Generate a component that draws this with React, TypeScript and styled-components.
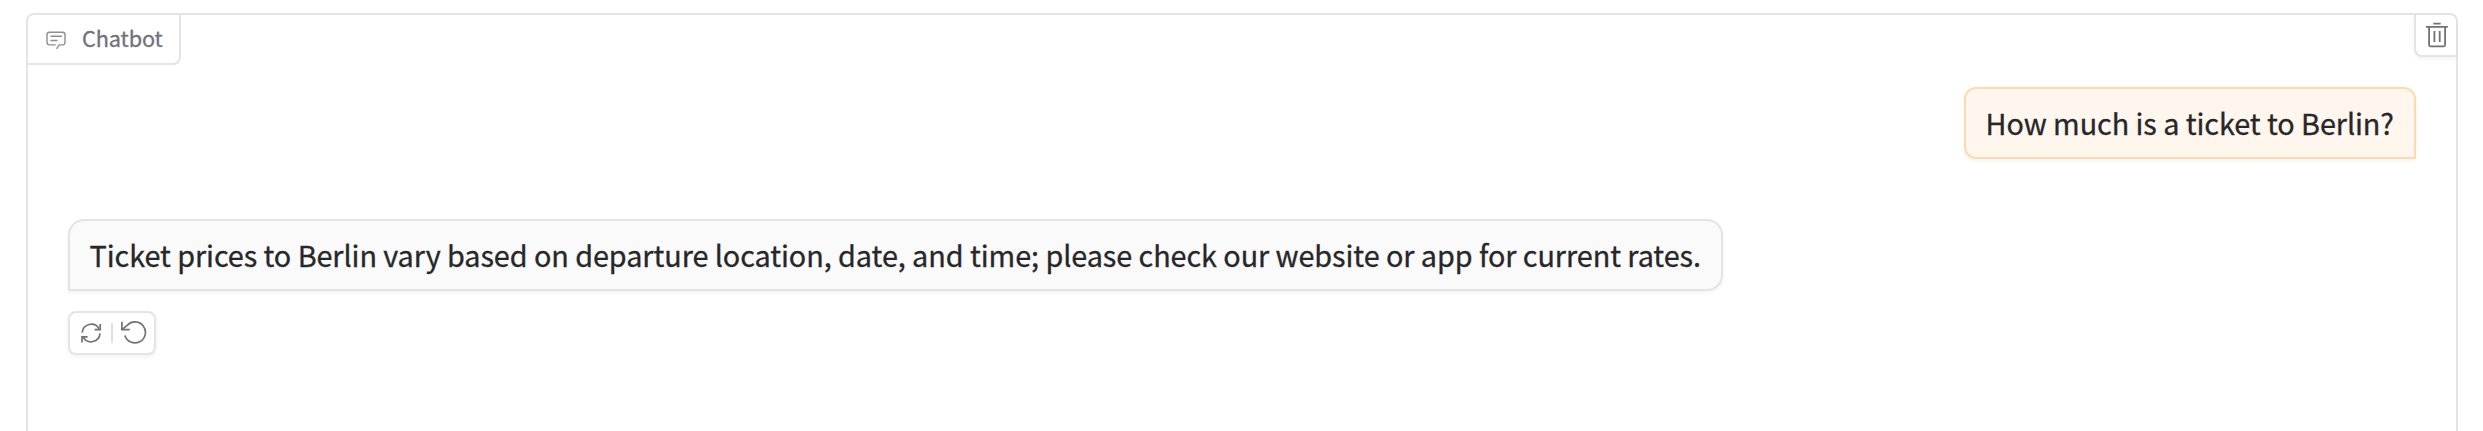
import React from "react";
import styled, { createGlobalStyle } from "styled-components";

const GlobalStyle = createGlobalStyle`
  *, *::before, *::after { box-sizing: border-box; }
  body { margin: 0; background: #ffffff; overflow: hidden; }
`;

const Page = styled.main`
  height: 431px;
  padding: 13px 25px 0 26px;
  overflow: hidden;
  font-family: "Noto Sans CJK SC", "Noto Sans", sans-serif;
`;

const Panel = styled.section`
  height: 620px;
  border: 2px solid #e4e4e5;
  border-radius: 8px;
`;

const PanelHeader = styled.header`
  display: flex;
  justify-content: space-between;
  align-items: flex-start;
  height: 72px;
`;

const Label = styled.div`
  display: flex;
  align-items: center;
  width: 153px;
  height: 50px;
  padding-left: 16px;
  gap: 14px;
  border: solid #e4e4e5;
  border-width: 0 2px 2px 0;
  border-radius: 8px 0 8px 0;
  color: #71717a;
  font-size: 21.7px;
  letter-spacing: -0.1px;
  line-height: 30px;
  white-space: nowrap;
  -webkit-text-stroke: 0.3px currentColor;
`;

const LabelText = styled.span`
  margin-bottom: 2px;
`;

const ClearButton = styled.button`
  display: flex;
  width: 42px;
  height: 42px;
  padding: 5px 0 0 8px;
  border: solid #e4e4e5;
  border-width: 0 0 2px 2px;
  border-radius: 0 8px 0 8px;
  background: #ffffff;
  box-shadow: 0 2px 4px rgba(0, 0, 0, 0.05);
  color: #71717a;
`;

const Messages = styled.div`
  display: flex;
  flex-direction: column;
  padding: 0 40px;
`;

const Bubble = styled.div<{ $from: "user" | "bot" }>`
  display: flex;
  align-items: center;
  align-self: ${(p) => (p.$from === "user" ? "flex-end" : "flex-start")};
  width: ${(p) => (p.$from === "user" ? "452px" : "1655px")};
  height: 72px;
  padding-left: ${(p) => (p.$from === "user" ? "19.5px" : "19.5px")};
  border: 2px solid ${(p) => (p.$from === "user" ? "#fedbac" : "#e4e4e5")};
  border-radius: ${(p) => (p.$from === "user" ? "12px 12px 0 12px" : "16px 16px 16px 0")};
  background: ${(p) => (p.$from === "user" ? "#fff6ed" : "#fafafa")};
  box-shadow: 0 2px 4px rgba(0, 0, 0, 0.05);
  color: #27272a;
  font-size: 28.8px;
  letter-spacing: -0.067px;
  line-height: 44px;
  white-space: nowrap;
  -webkit-text-stroke: 0.3px currentColor;
  & + & { margin-top: 60px; }
`;

const Actions = styled.div`
  display: flex;
  align-items: center;
  width: 88px;
  height: 44px;
  margin-top: 20px;
  padding-left: 9px;
  border: 2px solid #e4e4e5;
  border-radius: 8px;
  background: #ffffff;
  box-shadow: 0 2px 4px rgba(0, 0, 0, 0.05);
`;

const ActionButton = styled.button`
  display: flex;
  padding: 0;
  border: 0;
  background: none;
  color: #71717a;
`;

const Divider = styled.span`
  width: 2px;
  height: 20px;
  margin: 0 6px 0 8px;
  background: #e0e0e1;
`;

const ChatIcon = () => (
  <svg width="24" height="24" viewBox="0 0 24 24" fill="none" stroke="#8e8e96" strokeWidth="1.4" strokeLinecap="round">
    <path d="M12.9 21.4 15.2 17.9h3.2A2.6 2.6 0 0 0 21 15.3V7.9A2.6 2.6 0 0 0 18.4 5.3H5.6A2.6 2.6 0 0 0 3 7.9v7.4A2.6 2.6 0 0 0 5.6 17.9h5.6" />
    <path d="M7 9.3h10.6M7 13.5h6" />
  </svg>
);

const TrashIcon = () => (
  <svg width="26" height="30" viewBox="0 0 26 30" fill="none" stroke="currentColor" strokeWidth="1.8">
    <path d="M9.3 3.6h7.4M2 6.9h21.8M5.1 6.9v18.2q0 1.2 1.2 1.2h13.6q1.2 0 1.2-1.2V6.9M10.4 11v11M15.7 11v11" />
  </svg>
);

const RetryIcon = () => (
  <svg width="24" height="24" viewBox="0 0 24 24" fill="none" stroke="currentColor" strokeWidth="1.7">
    <path d="M3.2 11.6A9 9 0 0 1 20 7.8" />
    <path d="M21.2 3v5.6h-5.6" />
    <path d="M21 12.4A9 9 0 0 1 4.2 16.2" />
    <path d="M3 21.4v-5.6h5.6" />
  </svg>
);

const UndoIcon = () => (
  <svg width="28" height="28" viewBox="0 0 28 28" fill="none" stroke="currentColor" strokeWidth="1.7">
    <path d="M2.9 2.8v7.9h7.9" />
    <path d="M2.9 10.7 8.4 6.1A10.5 10.5 0 1 1 5.9 16.5" />
  </svg>
);

export default function App() {
  return (
    <>
      <GlobalStyle />
      <Page>
        <Panel>
          <PanelHeader>
            <Label>
              <ChatIcon />
              <LabelText>Chatbot</LabelText>
            </Label>
            <ClearButton aria-label="Clear">
              <TrashIcon />
            </ClearButton>
          </PanelHeader>
          <Messages>
            <Bubble $from="user">How much is a ticket to Berlin?</Bubble>
            <Bubble $from="bot">
              Ticket prices to Berlin vary based on departure location, date, and time; please check our website or app for current rates.
            </Bubble>
            <Actions>
              <ActionButton aria-label="Retry">
                <RetryIcon />
              </ActionButton>
              <Divider />
              <ActionButton aria-label="Undo">
                <UndoIcon />
              </ActionButton>
            </Actions>
          </Messages>
        </Panel>
      </Page>
    </>
  );
}
